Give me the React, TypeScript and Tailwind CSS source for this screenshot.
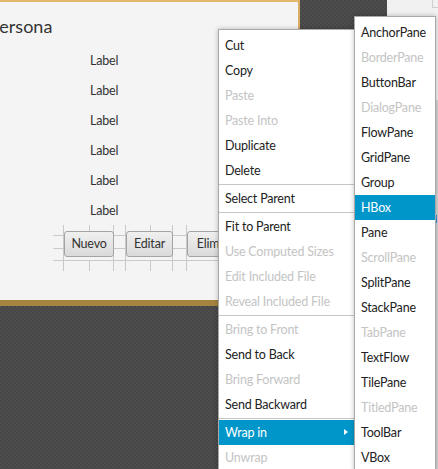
import React from "react";

type Item = { label: string; disabled?: boolean; active?: boolean; sub?: boolean } | "sep";

const menu: Item[] = [
  { label: "Cut" },
  { label: "Copy" },
  { label: "Paste", disabled: true },
  { label: "Paste Into", disabled: true },
  { label: "Duplicate" },
  { label: "Delete" },
  "sep",
  { label: "Select Parent" },
  "sep",
  { label: "Fit to Parent" },
  { label: "Use Computed Sizes", disabled: true },
  { label: "Edit Included File", disabled: true },
  { label: "Reveal Included File", disabled: true },
  "sep",
  { label: "Bring to Front", disabled: true },
  { label: "Send to Back" },
  { label: "Bring Forward", disabled: true },
  { label: "Send Backward" },
  "sep",
  { label: "Wrap in", active: true, sub: true },
  { label: "Unwrap", disabled: true },
];

const wrapIn: Item[] = [
  { label: "AnchorPane" },
  { label: "BorderPane", disabled: true },
  { label: "ButtonBar" },
  { label: "DialogPane", disabled: true },
  { label: "FlowPane" },
  { label: "GridPane" },
  { label: "Group" },
  { label: "HBox", active: true },
  { label: "Pane" },
  { label: "ScrollPane", disabled: true },
  { label: "SplitPane" },
  { label: "StackPane" },
  { label: "TabPane", disabled: true },
  { label: "TextFlow" },
  { label: "TilePane" },
  { label: "TitledPane", disabled: true },
  { label: "ToolBar" },
  { label: "VBox" },
];

function MenuList({ items }: { items: Item[] }) {
  return (
    <>
      {items.map((it, i) =>
        it === "sep" ? (
          <div key={i} className="py-px">
            <div className="h-px bg-[#c6c6c6]" />
          </div>
        ) : (
          <div
            key={i}
            className={
              "relative flex h-[25px] items-center whitespace-nowrap pl-[6px] pt-px " +
              (it.active
                ? "bg-[#0096c9] text-white"
                : it.disabled
                ? "text-[#c4c4c4]"
                : "text-[#222]")
            }
          >
            {it.label}
            {it.sub && (
              <span className="absolute right-[6px] top-[9px] h-0 w-0 border-y-[3.5px] border-l-[4px] border-y-transparent border-l-white" />
            )}
          </div>
        )
      )}
    </>
  );
}

const buttons = [
  { label: "Nuevo", x: 64, w: 50 },
  { label: "Editar", x: 126, w: 47 },
  { label: "Eliminar", x: 187, w: 62 },
];

function Guides() {
  const y1 = 233;
  const y2 = 259;
  const cy = 246;
  return (
    <svg className="absolute left-0 top-0" width="300" height="300" stroke="#c9c9c9" strokeWidth="1">
      {buttons.map((b) => {
        const x1 = b.x - 0.5;
        const x2 = b.x + b.w - 0.5;
        const cx = Math.round(b.x + b.w / 2) + 0.5;
        return (
          <g key={b.label}>
            <line x1={x1 - 10} y1={y1 + 0.5} x2={x2 + 10} y2={y1 + 0.5} />
            <line x1={x1 - 10} y1={y2 - 0.5} x2={x2 + 10} y2={y2 - 0.5} />
            <line x1={x1} y1={y1 - 10} x2={x1} y2={y2 + 10} />
            <line x1={x2} y1={y1 - 10} x2={x2} y2={y2 + 10} />
            <line x1={cx} y1={y1 - 10} x2={cx} y2={y1} />
            <line x1={cx} y1={y2} x2={cx} y2={y2 + 10} />
            <line x1={x1 - 10} y1={cy + 0.5} x2={x1} y2={cy + 0.5} />
            <line x1={x2} y1={cy + 0.5} x2={x2 + 10} y2={cy + 0.5} />
          </g>
        );
      })}
    </svg>
  );
}

export default function App() {
  return (
    <div
      className="relative h-[469px] w-[438px] overflow-hidden bg-[#4a4a4a] bg-[repeating-conic-gradient(#4e4e4e_0_25%,#464646_0_50%)] bg-[length:4px_4px] text-[12.5px] tracking-[-0.2px]"
      style={{ fontFamily: "Lato, 'Noto Sans', sans-serif" }}
    >
      <div className="flex h-full">
        {/* design canvas */}
        <div className="relative h-[306px] w-[300px] border-r-2 border-t-2 border-b-[6px] border-r-[#d9ad62] border-t-[#e3b86f] border-b-[#a4843f] bg-[#f4f4f4]">
          <Guides />
          <div className="relative flex flex-col">
            <div className="-ml-[11px] mt-[12px] h-[24px] text-[18px] leading-[24px] tracking-normal text-[#333]">Persona</div>
            <div className="mt-[8px] flex flex-col pl-[90px] text-[#333]">
              {[0, 1, 2, 3, 4, 5].map((i) => (
                <div key={i} className="flex h-[30px] items-center pt-px">
                  Label
                </div>
              ))}
            </div>
            <div className="mt-[5px] flex">
              {buttons.map((b, i) => (
                <div
                  key={b.label}
                  className="flex h-[26px] items-center justify-center rounded-[3px] border border-[#a4a4a4] bg-gradient-to-b from-[#f0f0f0] to-[#dadada] text-[#333]"
                  style={{ width: b.w, marginLeft: i === 0 ? b.x : b.x - buttons[i - 1].x - buttons[i - 1].w }}
                >
                  {b.label}
                </div>
              ))}
            </div>
          </div>
        </div>
        <div className="flex-1" />
        {/* neighbouring panel at the right edge */}
        <div className="relative w-[51px] bg-[#f1f1f1]">
          <div className="absolute right-0 top-0 h-[8px] w-[6px] border-b border-l border-[#cfcfcf]" />
          <div className="absolute right-0 top-[100px] h-full w-[3px] bg-[#d4d4d4]" />
          <div className="absolute right-[1px] top-[215px] h-[8px] w-[2px] bg-[#3b8fd6]" />
        </div>
      </div>

      {/* context menu */}
      <div className="absolute left-[218px] top-[29px] w-[137px] border border-[#a9a9a9] bg-white pt-[3px] shadow-[0_0_5px_rgba(0,0,0,0.25)]">
        <MenuList items={menu} />
      </div>

      {/* Wrap in submenu */}
      <div className="absolute left-[354px] top-[16px] w-[82px] border border-[#a9a9a9] bg-white pt-[3px] shadow-[0_0_5px_rgba(0,0,0,0.25)]">
        <MenuList items={wrapIn} />
      </div>
    </div>
  );
}
